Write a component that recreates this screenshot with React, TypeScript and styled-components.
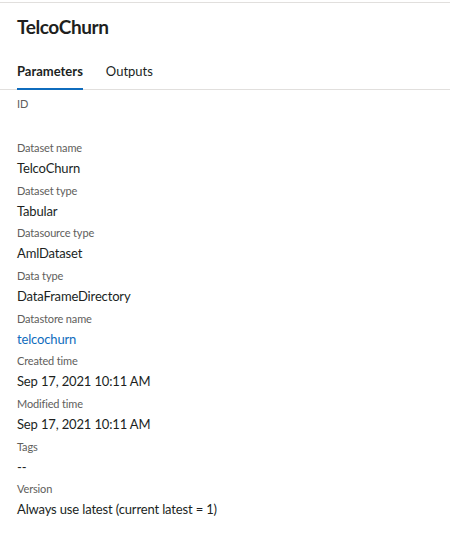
import React from "react";
import styled, { createGlobalStyle } from "styled-components";

const Global = createGlobalStyle`
  html, body { margin: 0; padding: 0; background: #ffffff; }
  body { font-family: "Segoe UI", Lato, "Open Sans", sans-serif; color: #201f1e; }
`;

const Page = styled.div`
  width: 450px;
  padding-top: 2px;
`;

const Panel = styled.div`
  border-top: 1px solid #e1dfdd;
`;

const Title = styled.h1`
  margin: 0;
  padding: 10px 17px 0;
  font-size: 19px;
  line-height: 28px;
  font-weight: 700;
  letter-spacing: -0.4px;
  color: #201f1e;
`;

const TabBar = styled.div`
  display: flex;
  gap: 23px;
  padding: 0 17px;
  margin-top: 12px;
  border-bottom: 1px solid #e1dfdd;
`;

const Tab = styled.div<{ $active?: boolean }>`
  font-size: 13px;
  line-height: 20px;
  font-weight: ${(p) => (p.$active ? 700 : 400)};
  color: #201f1e;
  padding: 8px 0 7px;
  border-bottom: 2px solid ${(p) => (p.$active ? "#0f6cbd" : "transparent")};
  margin-bottom: -1px;
`;

const Fields = styled.dl`
  margin: 0;
  padding: 4px 17px 20px;
  display: flex;
  flex-direction: column;
`;

const Field = styled.div`
  display: flex;
  flex-direction: column;
  min-height: 42.67px;
`;

const Label = styled.dt`
  font-size: 11px;
  line-height: 16px;
  letter-spacing: -0.15px;
  color: #605e5c;
  margin-top: 2px;
`;

const Value = styled.dd<{ $link?: boolean; $empty?: boolean }>`
  margin: 2px 0 0;
  font-size: 13px;
  line-height: 20px;
  letter-spacing: -0.15px;
  min-height: ${(p) => (p.$empty ? "24px" : "20px")};
  color: ${(p) => (p.$link ? "#0f6cbd" : "#201f1e")};
`;

const fields: { label: string; value: string; link?: boolean }[] = [
  { label: "ID", value: "" },
  { label: "Dataset name", value: "TelcoChurn" },
  { label: "Dataset type", value: "Tabular" },
  { label: "Datasource type", value: "AmlDataset" },
  { label: "Data type", value: "DataFrameDirectory" },
  { label: "Datastore name", value: "telcochurn", link: true },
  { label: "Created time", value: "Sep 17, 2021 10:11 AM" },
  { label: "Modified time", value: "Sep 17, 2021 10:11 AM" },
  { label: "Tags", value: "--" },
  { label: "Version", value: "Always use latest (current latest = 1)" },
];

export default function App() {
  return (
    <Page>
      <Global />
      <Panel>
        <Title>TelcoChurn</Title>
        <TabBar>
          <Tab $active>Parameters</Tab>
          <Tab>Outputs</Tab>
        </TabBar>
        <Fields>
          {fields.map((f) => (
            <Field key={f.label}>
              <Label>{f.label}</Label>
              <Value $link={f.link} $empty={!f.value}>
                {f.value}
              </Value>
            </Field>
          ))}
        </Fields>
      </Panel>
    </Page>
  );
}
